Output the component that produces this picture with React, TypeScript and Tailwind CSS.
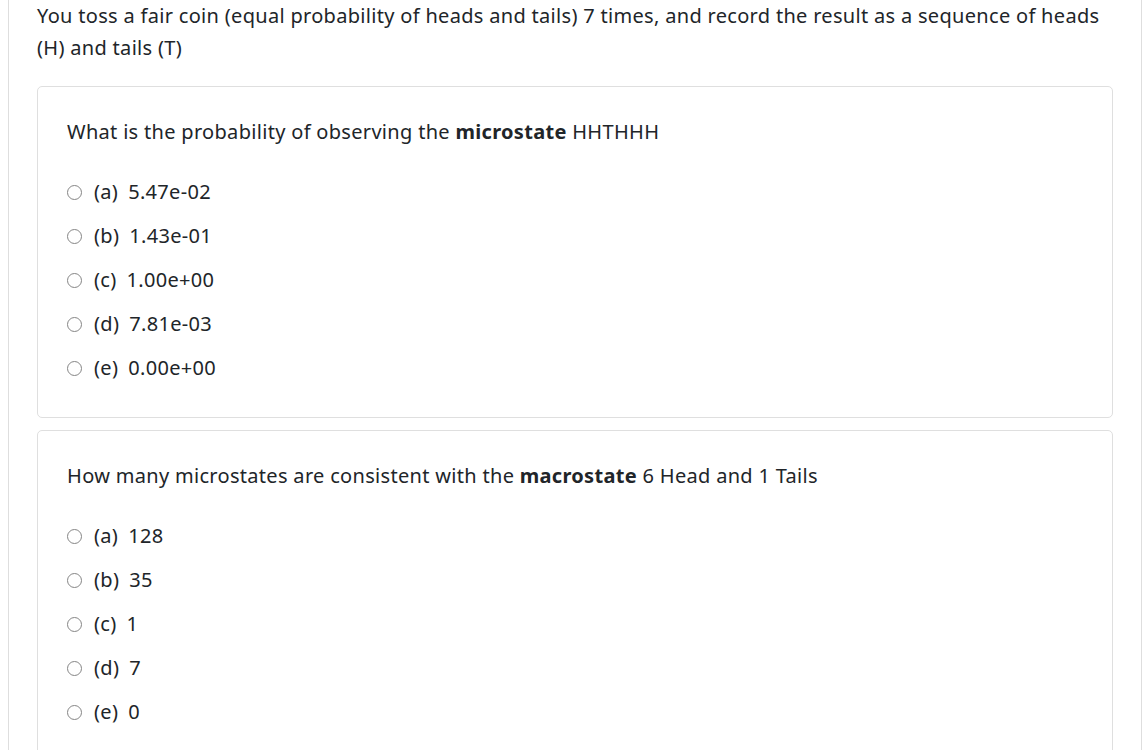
const questions = [
  {
    pre: 'What is the probability of observing the ',
    bold: 'microstate',
    post: ' HHTHHH',
    options: ['5.47e-02', '1.43e-01', '1.00e+00', '7.81e-03', '0.00e+00'],
  },
  {
    pre: 'How many microstates are consistent with the ',
    bold: 'macrostate',
    post: ' 6 Head and 1 Tails',
    options: ['128', '35', '1', '7', '0'],
  },
];

const letters = ['a', 'b', 'c', 'd', 'e'];

function Question({ q }: { q: (typeof questions)[number] }) {
  return (
    <div className="border border-[#dfdfdf] rounded-[5px] pl-[29px] pr-[29px] pt-[30px] pb-[34px]">
      <p className="leading-[30px]">
        {q.pre}
        <b className="font-bold">{q.bold}</b>
        {q.post}
      </p>
      <div className="mt-[30px] flex flex-col gap-[14px]">
        {q.options.map((opt, i) => (
          <label key={i} className="flex items-center leading-[30px]">
            <span className="w-[15px] h-[15px] rounded-full border border-[#858585] bg-white shrink-0" />
            <span className="ml-[12px]">({letters[i]})</span>
            <span className="ml-[10px]">{opt}</span>
          </label>
        ))}
      </div>
    </div>
  );
}

export default function App() {
  return (
    <div className="bg-white w-[1148px] h-[750px] overflow-hidden">
      <div
        className="ml-[8px] w-[1134px] border-l border-r border-[#dedede] px-[28px] text-[20px] tracking-[0.31px] text-[#212529]"
        style={{ fontFamily: '"Noto Sans", sans-serif' }}
      >
        <p className="leading-[32px]">
          You toss a fair coin (equal probability of heads and tails) 7 times, and record the result as a sequence of heads (H) and tails (T)
        </p>
        <div className="mt-[22px] flex flex-col gap-[12px]">
          {questions.map((q, i) => (
            <Question key={i} q={q} />
          ))}
        </div>
      </div>
    </div>
  );
}
